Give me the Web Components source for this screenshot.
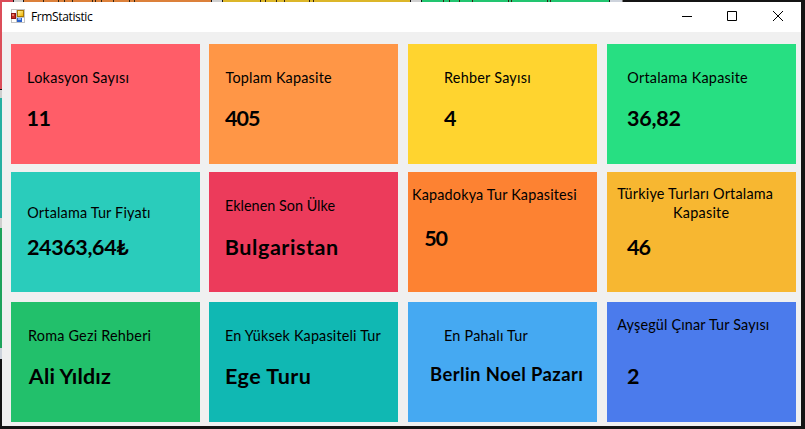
<!DOCTYPE html>
<html lang="tr">
<head>
<meta charset="utf-8">
<title>FrmStatistic</title>
<style>
html,body{margin:0;height:100%;overflow:hidden;background:#141414}
body{font-family:Lato,"Open Sans",sans-serif;color:#000}
</style>
</head>
<body>
<desktop-view>
  <form-window caption="FrmStatistic">
    <stat-card color="#ff5d68"><fit-text size="14.4" x="17" w="100.5" top="23">Lokasyon Sayısı</fit-text><fit-text size="21.5" bold x="16.6" w="23" top="15">11</fit-text></stat-card>
    <stat-card color="#ff9646"><fit-text size="14.4" x="16.5" w="106.5" top="23">Toplam Kapasite</fit-text><fit-text size="21.5" bold x="16" w="35" top="15">405</fit-text></stat-card>
    <stat-card color="#ffd42f"><fit-text size="14.4" x="37" w="85.5" top="23">Rehber Sayısı</fit-text><fit-text size="21.5" bold x="36" w="11.6" top="15">4</fit-text></stat-card>
    <stat-card color="#27df82"><fit-text size="14.4" x="20.3" w="120.8" top="23">Ortalama Kapasite</fit-text><fit-text size="21.5" bold x="20" w="53.5" top="15">36,82</fit-text></stat-card>

    <stat-card color="#2accbb"><fit-text size="14.4" x="16.3" w="123.4" top="30">Ortalama Tur Fiyatı</fit-text><fit-text size="21.5" bold x="16" w="102.3" top="9">24363,64₺</fit-text></stat-card>
    <stat-card color="#ec3b5b"><fit-text size="14.4" x="17" w="109.4" top="23">Eklenen Son Ülke</fit-text><fit-text size="21.5" bold x="16.8" w="111.3" top="16">Bulgaristan</fit-text></stat-card>
    <stat-card color="#fd8232"><fit-text size="14.4" x="5" w="164" top="12">Kapadokya Tur Kapasitesi</fit-text><fit-text size="21.5" bold x="16.2" w="23.3" top="18">50</fit-text></stat-card>
    <stat-card color="#f7b731"><fit-text size="14.4" x="10.3" w="156" top="11">Türkiye Turları Ortalama</fit-text><fit-text size="14.4" x="67" w="55.5" top="-1">Kapasite</fit-text><fit-text size="21.5" bold x="20" w="23.6" top="9">46</fit-text></stat-card>

    <stat-card color="#22c06b"><fit-text size="14.4" x="18" w="121.6" top="23">Roma Gezi Rehberi</fit-text><fit-text size="21.5" bold x="16.8" w="84" top="15">Ali Yıldız</fit-text></stat-card>
    <stat-card color="#10b8b3"><fit-text size="14.4" x="17" w="156.5" top="23">En Yüksek Kapasiteli Tur</fit-text><fit-text size="21.5" bold x="17" w="84.5" top="15">Ege Turu</fit-text></stat-card>
    <stat-card color="#45a9f2"><fit-text size="14.4" x="37" w="84" top="23">En Pahalı Tur</fit-text><fit-text size="18.4" bold x="23" w="151.2" top="13">Berlin Noel Pazarı</fit-text></stat-card>
    <stat-card color="#4b7bec"><fit-text size="14.4" x="10.3" w="152.6" top="12">Ayşegül Çınar Tur Sayısı</fit-text><fit-text size="21.5" bold x="20" w="11" top="26">2</fit-text></stat-card>
  </form-window>
</desktop-view>
<script>
const ctx = document.createElement('canvas').getContext('2d');

/* One line of text whose inked part starts at x and spans w pixels. */
class FitText extends HTMLElement {
  connectedCallback() {
    const size = +this.getAttribute('size'), bold = this.hasAttribute('bold');
    const x = +this.getAttribute('x'), w = +this.getAttribute('w'), top = this.getAttribute('top') || 0;
    const family = this.getAttribute('family') || 'Lato';
    const text = this.textContent;
    ctx.font = `${bold ? 700 : 400} ${size}px "${family}", sans-serif`;
    const m = ctx.measureText(text);
    const ink = m.actualBoundingBoxLeft + m.actualBoundingBoxRight;
    const gap = text.length > 1 ? (w - ink) / (text.length - 1) : 0;
    const root = this.attachShadow({mode: 'open'});
    root.innerHTML = `<style>
      :host{display:block;flex:none;white-space:nowrap;font:${bold ? 700 : 400} ${size}px/${bold ? 30 : 20}px "${family}",sans-serif;
        letter-spacing:${gap.toFixed(3)}px;padding-left:${(x + m.actualBoundingBoxLeft).toFixed(2)}px;margin-top:${top}px}
    </style><slot></slot>`;
  }
}
customElements.define('fit-text', FitText);

class StatCard extends HTMLElement {
  connectedCallback() {
    this.attachShadow({mode: 'open'}).innerHTML = `<style>
      :host{display:flex;flex-direction:column;box-sizing:border-box;background:${this.getAttribute('color')};min-width:0;overflow:hidden;padding-top:1px}
    </style><slot></slot>`;
  }
}
customElements.define('stat-card', StatCard);

class FormIcon extends HTMLElement {
  connectedCallback() {
    this.attachShadow({mode: 'open'}).innerHTML = `<style>:host{display:block;width:14px;height:14px}svg{display:block}</style>
    <svg width="14" height="14" viewBox="0 0 14 14" shape-rendering="crispEdges">
      <defs><linearGradient id="y" x2="1" y2="1"><stop stop-color="#fff3a0"/><stop offset="1" stop-color="#f0b400"/></linearGradient></defs>
      <rect width="14" height="14" fill="#c3c3c3"/>
      <rect x="1" y="1" width="4" height="3" fill="#fff"/><rect x="1" y="10" width="4" height="3" fill="#fff"/>
      <rect x="11" y="9" width="2" height="4" fill="#fff"/>
      <rect y="4" width="5" height="6" fill="#8c1414"/><rect x="1" y="5" width="3" height="4" fill="#c22a20"/><rect x="1" y="5" width="2" height="2" fill="#e67a68"/>
      <rect x="6" y="1" width="7" height="7" fill="#a97800"/><rect x="7" y="2" width="5" height="5" fill="url(#y)"/>
      <rect x="6" y="9" width="5" height="4" fill="#2c62cc"/><rect x="7" y="9" width="3" height="2" fill="#86b4fa"/>
    </svg>`;
  }
}
customElements.define('form-icon', FormIcon);

class WindowButtons extends HTMLElement {
  connectedCallback() {
    this.attachShadow({mode: 'open'}).innerHTML = `<style>
      :host{display:flex;margin-left:auto}
      svg{display:block;width:46px;height:30px;fill:none;stroke:#000}
    </style>
    <svg viewBox="0 0 46 30"><path d="M19 14.5h10"/></svg>
    <svg viewBox="0 0 46 30"><path d="M18.5 9.5h9v9h-9z"/></svg>
    <svg viewBox="0 0 46 30"><path d="M18 9l10 10M28 9L18 19"/></svg>`;
  }
}
customElements.define('window-buttons', WindowButtons);

class FormWindow extends HTMLElement {
  connectedCallback() {
    this.attachShadow({mode: 'open'}).innerHTML = `<style>
      :host{display:flex;flex-direction:column;width:799px;height:424px;background:#f0f0f0}
      header{display:flex;height:30px;background:#fff;flex:none}
      form-icon{margin:7px 0 0 9px}
      main{display:grid;grid-template-columns:189px 189px 189px 189px;column-gap:9px;grid-template-rows:120px 120px 120px;row-gap:8px;padding:12px 0 0 9px}
      ::slotted(:nth-child(4n+3)){margin:0 -1px 0 1px}
      ::slotted(:nth-child(4n)){margin:0 -2px 0 2px}
      ::slotted(:nth-child(n+9)){margin-top:2px;margin-bottom:-2px}
    </style>
    <header><form-icon></form-icon><fit-text family="Open Sans" size="12" x="7" w="61" top="5">${this.getAttribute('caption')}</fit-text><window-buttons></window-buttons></header>
    <main><slot></slot></main>`;
  }
}
customElements.define('form-window', FormWindow);

/* Edges of a second, dimmed window show above and left of the form. */
class DesktopView extends HTMLElement {
  connectedCallback() {
    const ticks = [43,58,64,72,92,95,101,113,129,134,260,265,276,284,309,313,443,449,459,472,508,511,547,550]
      .map(x => `<rect x="${x}" width="1" height="2"/>`).join('');
    this.attachShadow({mode: 'open'}).innerHTML = `<style>
      :host{display:grid;grid-template:2px 1fr/2px 1fr;width:805px;height:429px;background:#141414}
      .top{grid-column:1/3}
      svg{display:block}
    </style>
    <svg class="top" width="805" height="2" shape-rendering="crispEdges">
      <rect width="13" height="2" fill="#db4c58"/><rect x="14" width="9" height="2" fill="#cfcfcf"/>
      <rect x="24" width="187" height="2" fill="#dc803a"/><rect x="212" width="10" height="2" fill="#cfcfcf"/>
      <rect x="223" width="187" height="2" fill="#dcb629"/><rect x="411" width="10" height="2" fill="#cfcfcf"/>
      <rect x="422" width="187" height="2" fill="#22c570"/><rect x="610" width="12" height="2" fill="#cdd3dc"/>
      <rect x="622" width="1" height="2" fill="#777"/><g fill="#33240f">${ticks}</g>
    </svg>
    <svg width="2" height="427" shape-rendering="crispEdges">
      <rect width="2" height="87" fill="#dc4e59"/><rect y="88" width="2" height="8" fill="#cfcfcf"/>
      <rect y="96" width="2" height="120" fill="#25b0a2"/><rect y="216" width="2" height="10" fill="#cfcfcf"/>
      <rect y="226" width="2" height="120" fill="#1ea35b"/><rect y="346" width="2" height="11" fill="#cdd3dc"/>
    </svg>
    <slot></slot>`;
  }
}
customElements.define('desktop-view', DesktopView);
</script>
</body>
</html>
